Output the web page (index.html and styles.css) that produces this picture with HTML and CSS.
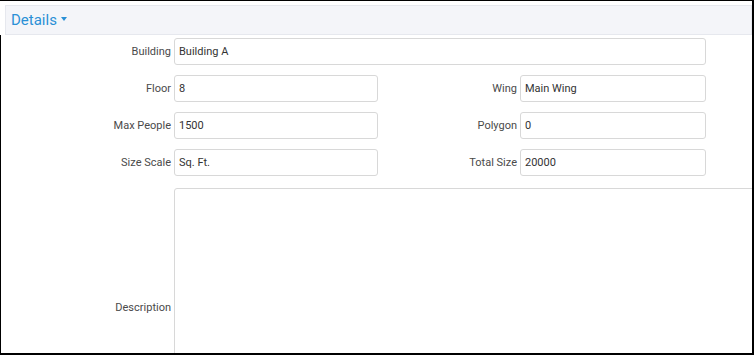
FILE: index.html
```html
<!DOCTYPE html>
<html lang="en">
<head>
    <meta charset="UTF-8">
    <title>Details</title>
    <link rel="stylesheet" href="styles.css">
</head>
<body>
    <div class="frame">
        <div class="panel-heading">
            <span class="panel-title">Details</span>
            <span class="caret"></span>
        </div>
        <div class="panel-body">
            <form class="form-grid">
                <label class="lbl">Building</label>
                <input class="field wide" type="text" value="Building A">

                <label class="lbl">Floor</label>
                <input class="field" type="text" value="8">
                <label class="lbl">Wing</label>
                <input class="field" type="text" value="Main Wing">

                <label class="lbl">Max People</label>
                <input class="field" type="text" value="1500">
                <label class="lbl">Polygon</label>
                <input class="field" type="text" value="0">

                <label class="lbl">Size Scale</label>
                <input class="field" type="text" value="Sq. Ft.">
                <label class="lbl">Total Size</label>
                <input class="field" type="text" value="20000">

                <label class="lbl">Description</label>
                <textarea class="field area"></textarea>
            </form>
        </div>
    </div>
</body>
</html>
```

FILE: styles.css
```css
body {
    margin: 0;
    font-family: Roboto, "Liberation Sans", sans-serif;
    background-color: #fff;
}
.frame {
    width: 754px;
    height: 355px;
    box-sizing: border-box;
    border-top: 1px solid #000;
    border-right: 2px solid #000;
    border-bottom: 2px solid #000;
    overflow: hidden;
    display: flex;
    flex-direction: column;
}
.panel-heading {
    margin: 4px 0 0 5px;
    height: 30px;
    box-sizing: border-box;
    background-color: #f4f5f9;
    border: 1px solid #e6e8ee;
    padding-left: 5px;
    display: flex;
    align-items: center;
    flex-shrink: 0;
}
.panel-title {
    color: #2a90d6;
    font-size: 15px;
}
.caret {
    width: 0;
    height: 0;
    margin-left: 4px;
    margin-top: -2px;
    border-left: 3.5px solid transparent;
    border-right: 3.5px solid transparent;
    border-top: 4px solid #2a90d6;
}
.panel-body {
    flex: 1;
    border-left: 1px solid #000;
    padding-top: 3px;
    overflow: hidden;
}
.form-grid {
    display: grid;
    grid-template-columns: 171px 204px 138px 186px;
    column-gap: 2px;
    row-gap: 10px;
    align-items: center;
    margin: 0;
}
.lbl {
    text-align: right;
    padding-right: 1px;
    font-size: 11px;
    color: #4a4a4a;
}
.field {
    height: 27px;
    box-sizing: border-box;
    border: 1px solid #d8d8d8;
    border-radius: 3px;
    padding: 0 4px;
    font-family: Roboto, "Liberation Sans", sans-serif;
    font-size: 11px;
    color: #333;
    background-color: #fff;
    margin: 0;
    outline: none;
}
.wide {
    grid-column: 2 / 5;
}
.area {
    grid-column: 2 / 5;
    width: 620px;
    height: 240px;
    margin-top: 2px;
    resize: none;
}
```
